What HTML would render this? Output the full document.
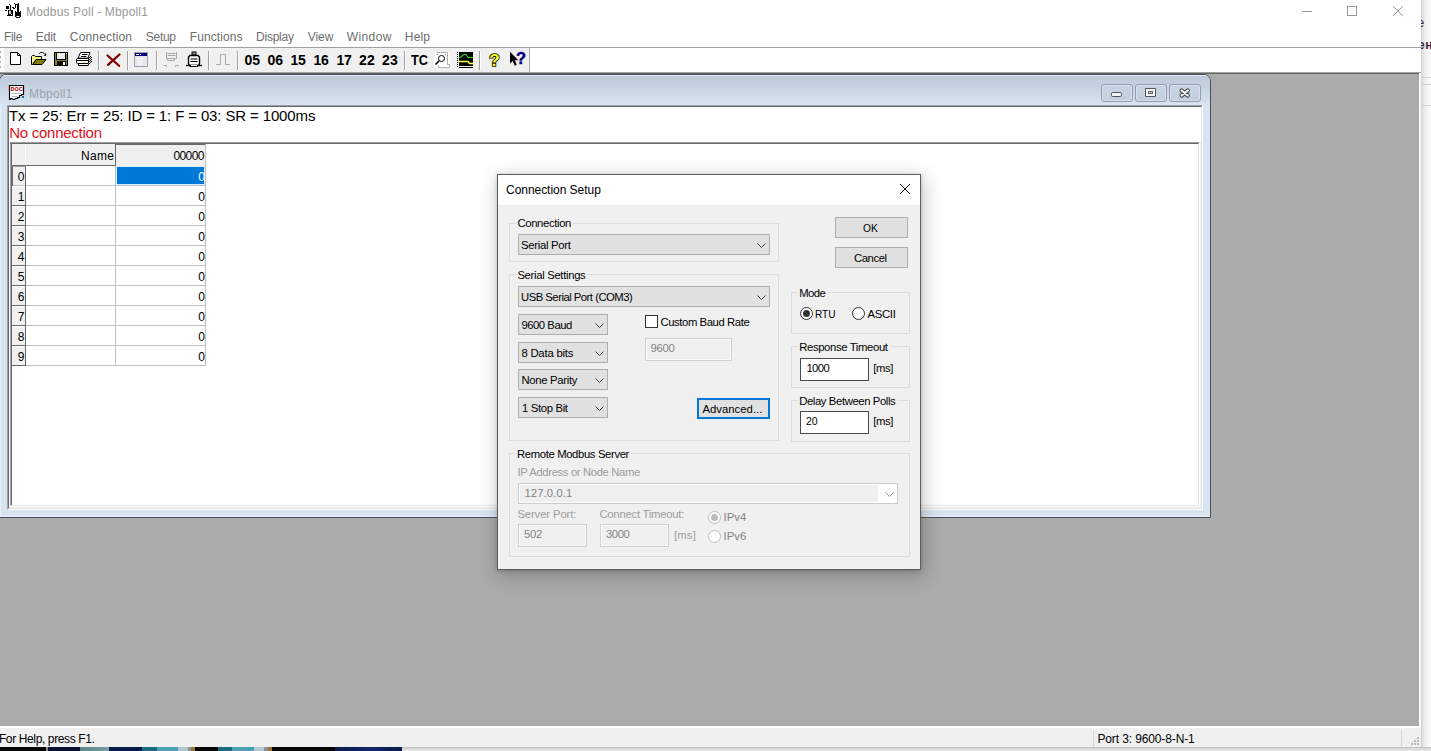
<!DOCTYPE html>
<html><head><meta charset="utf-8"><title>Modbus Poll - Mbpoll1</title>
<style>
html,body{margin:0;padding:0;}
body{width:1431px;height:751px;overflow:hidden;position:relative;background:#fff;font-family:"Liberation Sans",sans-serif;}
div,span.t,svg{position:absolute;box-sizing:border-box;}
span.t{white-space:pre;}
</style></head><body>
<div style="left:1421px;top:0px;width:10px;height:751px;background:linear-gradient(to right,#cdcdcd 0,#dcdcdc 1px,#e9e9e9 3px,#f4f4f4 6px,#fbfbfb 10px);overflow:hidden;"><div style="left:0;top:77px;width:10px;height:1px;background:#d4d4d4"></div><div style="left:0;top:84px;width:10px;height:1px;background:#cfcfcf"></div><div style="left:0;top:105px;width:10px;height:1px;background:#cfcfcf"></div><span class="t" style="left:-3.5px;top:12.5px;font-size:12px;line-height:20px;color:#2a2a34">e</span><span class="t" style="left:-3px;top:35px;font-size:12px;font-weight:bold;line-height:20px;color:#38284a;letter-spacing:0.5px">ен</span></div>
<div style="left:0px;top:747px;width:1431px;height:4px;background:linear-gradient(to bottom,#b9b9b9 0,#cfcfcf 1px,#dcdcdc 2px,#e6e6e6 4px);"></div>
<div style="left:0px;top:747px;width:402px;height:4px;background:linear-gradient(to right,#050505 0,#050505 46px,#8a8a8a 46px,#8a8a8a 48px,#0a1030 48px,#0a1030 80px,#5a8888 80px,#7aa0a0 109px,#0a1a50 109px,#0a1a50 142px,#1a6a80 142px,#1a6a80 157px,#4aa0b4 157px,#4aa0b4 178px,#b0c4cc 178px,#b0c4cc 188px,#8a9098 188px,#8a9098 191px,#9a7430 191px,#9a7430 195px,#050505 195px,#050505 218px,#1a6a80 218px,#1a6a80 232px,#4aa0b4 232px,#4aa0b4 254px,#b8c8d0 254px,#b8c8d0 264px,#8a9098 264px,#8a9098 268px,#9a7430 268px,#9a7430 272px,#050505 272px,#050505 335px,#0a1a4a 335px,#14286a 370px,#0a1a4a 401px);"></div>
<div style="left:0px;top:0px;width:1421px;height:747px;background:#fff;"></div>
<span class="t" style="left:26.00px;top:2.00px;font-size:12px;color:#999999;letter-spacing:0.154px;line-height:20px;">Modbus Poll - Mbpoll1</span>
<span class="t" style="left:4.00px;top:27.00px;font-size:12px;color:#6d6d6d;letter-spacing:-0.312px;line-height:20px;">File</span>
<span class="t" style="left:35.80px;top:27.00px;font-size:12px;color:#6d6d6d;letter-spacing:-0.159px;line-height:20px;">Edit</span>
<span class="t" style="left:69.80px;top:27.00px;font-size:12px;color:#6d6d6d;letter-spacing:0.166px;line-height:20px;">Connection</span>
<span class="t" style="left:145.80px;top:27.00px;font-size:12px;color:#6d6d6d;letter-spacing:-0.290px;line-height:20px;">Setup</span>
<span class="t" style="left:189.80px;top:27.00px;font-size:12px;color:#6d6d6d;letter-spacing:0.072px;line-height:20px;">Functions</span>
<span class="t" style="left:256.00px;top:27.00px;font-size:12px;color:#6d6d6d;letter-spacing:-0.224px;line-height:20px;">Display</span>
<span class="t" style="left:307.80px;top:27.00px;font-size:12px;color:#6d6d6d;letter-spacing:-0.064px;line-height:20px;">View</span>
<span class="t" style="left:346.80px;top:27.00px;font-size:12px;color:#6d6d6d;letter-spacing:0.384px;line-height:20px;">Window</span>
<span class="t" style="left:404.80px;top:27.00px;font-size:12px;color:#6d6d6d;letter-spacing:0.173px;line-height:20px;">Help</span>
<svg style="left:1295px;top:0;width:120px;height:24px" width="120" height="24" viewBox="0 0 120 24" fill="none" stroke="#999" stroke-width="1"><path d="M7 11.5H17"/><rect x="52.5" y="6.5" width="9" height="9"/><path d="M98 6L108 16M108 6L98 16"/></svg>
<div style="left:0px;top:47px;width:1421px;height:1px;background:#a0a0a0;"></div>
<div style="left:0px;top:48px;width:530px;height:24px;background:#f0f0f0;border-right:1px solid #a8a8a8;"></div>
<div style="left:0px;top:72px;width:1421px;height:1px;background:#a0a0a0;"></div>
<div style="left:0px;top:73px;width:1421px;height:1px;background:#646464;"></div>
<div style="left:0px;top:74px;width:1419px;height:652px;background:#ababab;"></div>
<div style="left:1419px;top:73px;width:2px;height:655px;background:#fff;"></div>
<div style="left:0px;top:726px;width:1421px;height:2px;background:#fff;"></div>
<div style="left:0px;top:728px;width:1421px;height:19px;background:#f0f0f0;"></div>
<div style="left:1093px;top:730px;width:1px;height:17px;background:#d7d7d7;"></div>
<div style="left:1401px;top:730px;width:1px;height:17px;background:#d7d7d7;"></div>
<span class="t" style="left:-1.10px;top:728.70px;font-size:12px;color:#000;letter-spacing:-0.372px;line-height:20px;">For Help, press F1.</span>
<span class="t" style="left:1097.40px;top:729.00px;font-size:12px;color:#000;letter-spacing:-0.117px;line-height:20px;">Port 3: 9600-8-N-1</span>
<svg style="left:1409px;top:737px" width="11" height="9"><rect x="8" y="0" width="2" height="2" fill="#b8b8b8"/><rect x="5" y="3" width="2" height="2" fill="#b8b8b8"/><rect x="8" y="3" width="2" height="2" fill="#b8b8b8"/><rect x="2" y="6" width="2" height="2" fill="#b8b8b8"/><rect x="5" y="6" width="2" height="2" fill="#b8b8b8"/><rect x="8" y="6" width="2" height="2" fill="#b8b8b8"/></svg>
<div style="left:98px;top:51px;width:1px;height:19px;background:#a0a0a0;"></div>
<div style="left:99px;top:51px;width:1px;height:19px;background:#fff;"></div>
<div style="left:127px;top:51px;width:1px;height:19px;background:#a0a0a0;"></div>
<div style="left:128px;top:51px;width:1px;height:19px;background:#fff;"></div>
<div style="left:156px;top:51px;width:1px;height:19px;background:#a0a0a0;"></div>
<div style="left:157px;top:51px;width:1px;height:19px;background:#fff;"></div>
<div style="left:208px;top:51px;width:1px;height:19px;background:#a0a0a0;"></div>
<div style="left:209px;top:51px;width:1px;height:19px;background:#fff;"></div>
<div style="left:237px;top:51px;width:1px;height:19px;background:#a0a0a0;"></div>
<div style="left:238px;top:51px;width:1px;height:19px;background:#fff;"></div>
<div style="left:404px;top:51px;width:1px;height:19px;background:#a0a0a0;"></div>
<div style="left:405px;top:51px;width:1px;height:19px;background:#fff;"></div>
<div style="left:479px;top:51px;width:1px;height:19px;background:#a0a0a0;"></div>
<div style="left:480px;top:51px;width:1px;height:19px;background:#fff;"></div>
<div style="left:0px;top:48px;width:4px;height:24px;background:#fdfdfd;"></div>
<div style="left:0px;top:51px;width:1px;height:2px;background:#b0b0b0;"></div>
<div style="left:0px;top:56px;width:1px;height:2px;background:#b0b0b0;"></div>
<div style="left:0px;top:61px;width:1px;height:2px;background:#b0b0b0;"></div>
<div style="left:0px;top:66px;width:1px;height:2px;background:#b0b0b0;"></div>
<span class="t" style="left:244.40px;top:50.00px;font-size:14px;color:#000;letter-spacing:0.028px;line-height:20px;font-weight:bold;">05</span>
<span class="t" style="left:267.40px;top:50.00px;font-size:14px;color:#000;letter-spacing:0.028px;line-height:20px;font-weight:bold;">06</span>
<span class="t" style="left:290.40px;top:50.00px;font-size:14px;color:#000;letter-spacing:-0.172px;line-height:20px;font-weight:bold;">15</span>
<span class="t" style="left:313.40px;top:50.00px;font-size:14px;color:#000;letter-spacing:-0.172px;line-height:20px;font-weight:bold;">16</span>
<span class="t" style="left:336.40px;top:50.00px;font-size:14px;color:#000;letter-spacing:-0.172px;line-height:20px;font-weight:bold;">17</span>
<span class="t" style="left:359.00px;top:50.00px;font-size:14px;color:#000;letter-spacing:0.228px;line-height:20px;font-weight:bold;">22</span>
<span class="t" style="left:382.00px;top:50.00px;font-size:14px;color:#000;letter-spacing:0.228px;line-height:20px;font-weight:bold;">23</span>
<span class="t" style="left:410.60px;top:50.00px;font-size:14px;color:#000;letter-spacing:0.000px;line-height:20px;transform:scaleX(0.9109);transform-origin:0 0;font-weight:bold;">TC</span>
<div style="left:-1px;top:74px;width:1212px;height:444px;background:#d7e4f2;border:1px solid #4a4f56;border-radius:7px 7px 0 0;"></div>
<div style="left:0px;top:106px;width:1px;height:411px;background:#e8eff7;"></div>
<div style="left:0px;top:516px;width:1210px;height:1px;background:#e8eff7;"></div>
<div style="left:0px;top:75px;width:1210px;height:31px;background:linear-gradient(to bottom,#e6edf5 0,#e6edf5 1px,#bccada 1px,#c9d6e4 50%,#d3e0ee 85%,#dce6f1 100%);border-radius:6px 6px 0 0;"></div>
<span class="t" style="left:28.90px;top:83.70px;font-size:12px;color:#9aa0a8;letter-spacing:0.246px;line-height:20px;">Mbpoll1</span>
<div style="left:7px;top:105px;width:1196px;height:405px;background:#fff;border-top:1px solid #a0a0a0;border-left:1px solid #a0a0a0;border-right:1px solid #fff;border-bottom:1px solid #fff;"></div>
<div style="left:8px;top:106px;width:1194px;height:403px;background:#fff;border-top:1px solid #696969;border-left:1px solid #696969;border-right:1px solid #e3e3e3;border-bottom:1px solid #e3e3e3;"></div>
<span class="t" style="left:9.00px;top:105.50px;font-size:15px;color:#000;letter-spacing:-0.130px;line-height:20px;">Tx = 25: Err = 25: ID = 1: F = 03: SR = 1000ms</span>
<span class="t" style="left:9.20px;top:122.50px;font-size:15px;color:#e2101c;letter-spacing:-0.258px;line-height:20px;">No connection</span>
<div style="left:9px;top:142px;width:1192px;height:366px;background:#f0efe9;"></div>
<div style="left:9px;top:142px;width:1191px;height:365px;background:#fff;border-top:1px solid #a0a0a0;border-left:1px solid #fff;border-right:1px solid #fff;border-bottom:1px solid #fff;"></div>
<div style="left:10px;top:143px;width:1189px;height:363px;background:#fff;border-top:1px solid #696969;border-left:1px solid #a0a0a0;border-right:1px solid #e3e3e3;border-bottom:1px solid #e3e3e3;"></div>
<div style="left:11px;top:144px;width:1px;height:361px;background:#696969;"></div>
<div style="left:12px;top:144px;width:194px;height:22px;background:#f0f0f0;"></div>
<div style="left:12px;top:166px;width:14px;height:200px;background:#f0f0f0;"></div>
<div style="left:26px;top:185px;width:180px;height:1px;background:#c0c0c0;"></div>
<div style="left:12px;top:185px;width:14px;height:1px;background:#c0c0c0;"></div>
<div style="left:26px;top:205px;width:180px;height:1px;background:#c0c0c0;"></div>
<div style="left:12px;top:205px;width:14px;height:1px;background:#696969;"></div>
<div style="left:12px;top:186px;width:14px;height:1px;background:#fff;"></div>
<div style="left:26px;top:225px;width:180px;height:1px;background:#c0c0c0;"></div>
<div style="left:12px;top:225px;width:14px;height:1px;background:#696969;"></div>
<div style="left:12px;top:206px;width:14px;height:1px;background:#fff;"></div>
<div style="left:26px;top:245px;width:180px;height:1px;background:#c0c0c0;"></div>
<div style="left:12px;top:245px;width:14px;height:1px;background:#696969;"></div>
<div style="left:12px;top:226px;width:14px;height:1px;background:#fff;"></div>
<div style="left:26px;top:265px;width:180px;height:1px;background:#c0c0c0;"></div>
<div style="left:12px;top:265px;width:14px;height:1px;background:#696969;"></div>
<div style="left:12px;top:246px;width:14px;height:1px;background:#fff;"></div>
<div style="left:26px;top:285px;width:180px;height:1px;background:#c0c0c0;"></div>
<div style="left:12px;top:285px;width:14px;height:1px;background:#696969;"></div>
<div style="left:12px;top:266px;width:14px;height:1px;background:#fff;"></div>
<div style="left:26px;top:305px;width:180px;height:1px;background:#c0c0c0;"></div>
<div style="left:12px;top:305px;width:14px;height:1px;background:#696969;"></div>
<div style="left:12px;top:286px;width:14px;height:1px;background:#fff;"></div>
<div style="left:26px;top:325px;width:180px;height:1px;background:#c0c0c0;"></div>
<div style="left:12px;top:325px;width:14px;height:1px;background:#696969;"></div>
<div style="left:12px;top:306px;width:14px;height:1px;background:#fff;"></div>
<div style="left:26px;top:345px;width:180px;height:1px;background:#c0c0c0;"></div>
<div style="left:12px;top:345px;width:14px;height:1px;background:#696969;"></div>
<div style="left:12px;top:326px;width:14px;height:1px;background:#fff;"></div>
<div style="left:26px;top:365px;width:180px;height:1px;background:#c0c0c0;"></div>
<div style="left:12px;top:365px;width:14px;height:1px;background:#696969;"></div>
<div style="left:12px;top:346px;width:14px;height:1px;background:#fff;"></div>
<div style="left:115px;top:166px;width:1px;height:200px;background:#c0c0c0;"></div>
<div style="left:205px;top:144px;width:1px;height:222px;background:#c0c0c0;"></div>
<div style="left:25px;top:166px;width:1px;height:200px;background:#696969;"></div>
<div style="left:12px;top:165px;width:104px;height:1px;background:#696969;"></div>
<div style="left:25px;top:144px;width:1px;height:21px;background:#fff;"></div>
<div style="left:115px;top:144px;width:1px;height:22px;background:#696969;"></div>
<div style="left:116px;top:144px;width:89px;height:1px;background:#696969;"></div>
<div style="left:11px;top:166px;width:2px;height:20px;background:#696969;"></div>
<div style="left:12px;top:166px;width:14px;height:1px;background:#a0a0a0;"></div>
<div style="left:116px;top:166px;width:89px;height:19px;background:#d4f0ff;"></div>
<div style="left:117px;top:167px;width:87px;height:17px;background:#0078d7;"></div>
<span class="t" style="left:80.90px;top:145.70px;font-size:12px;color:#000;letter-spacing:0.330px;line-height:20px;">Name</span>
<span class="t" style="left:173.40px;top:146.00px;font-size:12px;color:#000;letter-spacing:-0.592px;line-height:20px;">00000</span>
<span class="t" style="left:17.80px;top:167.30px;font-size:12px;color:#000;letter-spacing:0.000px;line-height:20px;">0</span>
<span class="t" style="left:198.20px;top:167.30px;font-size:12px;color:#fff;letter-spacing:0.000px;line-height:20px;">0</span>
<span class="t" style="left:17.80px;top:187.30px;font-size:12px;color:#000;letter-spacing:0.000px;line-height:20px;">1</span>
<span class="t" style="left:198.20px;top:187.30px;font-size:12px;color:#000;letter-spacing:0.000px;line-height:20px;">0</span>
<span class="t" style="left:17.80px;top:207.30px;font-size:12px;color:#000;letter-spacing:0.000px;line-height:20px;">2</span>
<span class="t" style="left:198.20px;top:207.30px;font-size:12px;color:#000;letter-spacing:0.000px;line-height:20px;">0</span>
<span class="t" style="left:17.80px;top:227.30px;font-size:12px;color:#000;letter-spacing:0.000px;line-height:20px;">3</span>
<span class="t" style="left:198.20px;top:227.30px;font-size:12px;color:#000;letter-spacing:0.000px;line-height:20px;">0</span>
<span class="t" style="left:17.80px;top:247.30px;font-size:12px;color:#000;letter-spacing:0.000px;line-height:20px;">4</span>
<span class="t" style="left:198.20px;top:247.30px;font-size:12px;color:#000;letter-spacing:0.000px;line-height:20px;">0</span>
<span class="t" style="left:17.80px;top:267.30px;font-size:12px;color:#000;letter-spacing:0.000px;line-height:20px;">5</span>
<span class="t" style="left:198.20px;top:267.30px;font-size:12px;color:#000;letter-spacing:0.000px;line-height:20px;">0</span>
<span class="t" style="left:17.80px;top:287.30px;font-size:12px;color:#000;letter-spacing:0.000px;line-height:20px;">6</span>
<span class="t" style="left:198.20px;top:287.30px;font-size:12px;color:#000;letter-spacing:0.000px;line-height:20px;">0</span>
<span class="t" style="left:17.80px;top:307.30px;font-size:12px;color:#000;letter-spacing:0.000px;line-height:20px;">7</span>
<span class="t" style="left:198.20px;top:307.30px;font-size:12px;color:#000;letter-spacing:0.000px;line-height:20px;">0</span>
<span class="t" style="left:17.80px;top:327.30px;font-size:12px;color:#000;letter-spacing:0.000px;line-height:20px;">8</span>
<span class="t" style="left:198.20px;top:327.30px;font-size:12px;color:#000;letter-spacing:0.000px;line-height:20px;">0</span>
<span class="t" style="left:17.80px;top:347.30px;font-size:12px;color:#000;letter-spacing:0.000px;line-height:20px;">9</span>
<span class="t" style="left:198.20px;top:347.30px;font-size:12px;color:#000;letter-spacing:0.000px;line-height:20px;">0</span>
<div style="left:1101px;top:84px;width:32px;height:18px;background:linear-gradient(to bottom,#c8d5e4,#c1cfdf);border:1px solid #8e9db3;border-radius:3px;box-shadow:inset 0 0 0 1px rgba(255,255,255,.35);"></div>
<div style="left:1135px;top:84px;width:32px;height:18px;background:linear-gradient(to bottom,#c8d5e4,#c1cfdf);border:1px solid #8e9db3;border-radius:3px;box-shadow:inset 0 0 0 1px rgba(255,255,255,.35);"></div>
<div style="left:1169px;top:84px;width:32px;height:18px;background:linear-gradient(to bottom,#c8d5e4,#c1cfdf);border:1px solid #8e9db3;border-radius:3px;box-shadow:inset 0 0 0 1px rgba(255,255,255,.35);"></div>
<svg style="left:1101px;top:84px" width="100" height="18" viewBox="0 0 100 18" fill="#f4f4f4" stroke="#555" stroke-width="1"><rect x="10.5" y="8.5" width="10" height="4" rx="1.2"/><path d="M44.500 4.500h10v8h-10zM47.500 7.500h4v2h-4z" fill-rule="evenodd"/><path d="M80.600 6.500L86.800 11.500M86.800 6.500L80.600 11.500" stroke="#4c4c4c" stroke-width="4.200" stroke-linecap="round" fill="none"/><path d="M80.600 6.500L86.800 11.500M86.800 6.500L80.600 11.500" stroke="#f6f6f6" stroke-width="2.200" stroke-linecap="round" fill="none"/></svg>
<div style="left:497px;top:174px;width:424px;height:396px;background:#f0f0f0;border:1px solid #5c5c5c;box-shadow:0 1px 4px rgba(0,0,0,.2),2px 5px 18px 2px rgba(0,0,0,.2);"></div>
<div style="left:498px;top:175px;width:422px;height:30px;background:#fff;"></div>
<span class="t" style="left:506.00px;top:180.00px;font-size:12px;color:#000;letter-spacing:-0.040px;line-height:20px;">Connection Setup</span>
<svg style="left:895px;top:179px" width="20" height="20" viewBox="0 0 20 20" fill="none" stroke="#000" stroke-width="1"><path d="M5 5L15 15M15 5L5 15"/></svg>
<div style="left:509px;top:223px;width:270px;height:39px;border:1px solid #dcdcdc;"></div>
<div style="left:516px;top:223px;width:57px;height:1px;background:#f0f0f0;"></div>
<span class="t" style="left:517.40px;top:213.40px;font-size:11.3px;color:#000;letter-spacing:-0.352px;line-height:20px;">Connection</span>
<div style="left:509px;top:274px;width:270px;height:167px;border:1px solid #dcdcdc;"></div>
<div style="left:516px;top:274px;width:71.39999999999998px;height:1px;background:#f0f0f0;"></div>
<span class="t" style="left:517.40px;top:265.00px;font-size:11.3px;color:#000;letter-spacing:-0.319px;line-height:20px;">Serial Settings</span>
<div style="left:791px;top:292px;width:119px;height:42px;border:1px solid #dcdcdc;"></div>
<div style="left:797.8px;top:292px;width:29.600000000000023px;height:1px;background:#f0f0f0;"></div>
<span class="t" style="left:799.20px;top:283.00px;font-size:11.3px;color:#000;letter-spacing:-0.556px;line-height:20px;">Mode</span>
<div style="left:791px;top:346px;width:119px;height:42px;border:1px solid #dcdcdc;"></div>
<div style="left:797.8px;top:346px;width:91.80000000000007px;height:1px;background:#f0f0f0;"></div>
<span class="t" style="left:799.20px;top:337.00px;font-size:11.3px;color:#000;letter-spacing:-0.361px;line-height:20px;">Response Timeout</span>
<div style="left:791px;top:400px;width:119px;height:42px;border:1px solid #dcdcdc;"></div>
<div style="left:797.8px;top:400px;width:99.60000000000002px;height:1px;background:#f0f0f0;"></div>
<span class="t" style="left:799.20px;top:391.00px;font-size:11.3px;color:#000;letter-spacing:-0.391px;line-height:20px;">Delay Between Polls</span>
<div style="left:509px;top:453px;width:401px;height:104px;border:1px solid #dcdcdc;"></div>
<div style="left:515.6px;top:453px;width:115.39999999999998px;height:1px;background:#f0f0f0;"></div>
<span class="t" style="left:517.00px;top:444.00px;font-size:11.3px;color:#000;letter-spacing:-0.365px;line-height:20px;">Remote Modbus Server</span>
<div style="left:518px;top:234px;width:252px;height:21px;background:#e1e1e1;border:1px solid #adadad;"></div>
<span class="t" style="left:521.00px;top:235.00px;font-size:11.3px;color:#000;letter-spacing:-0.295px;line-height:20px;">Serial Port</span>
<svg style="left:756.6px;top:243px" width="10" height="6" viewBox="0 0 10 6" fill="none" stroke="#444" stroke-width="1"><path d="M0.500 0.500L4.500 4.500L8.500 0.500"/></svg>
<div style="left:518px;top:286px;width:252px;height:21px;background:#e1e1e1;border:1px solid #adadad;"></div>
<span class="t" style="left:521.00px;top:287.40px;font-size:11.3px;color:#000;letter-spacing:-0.507px;line-height:20px;">USB Serial Port (COM3)</span>
<svg style="left:756.6px;top:295px" width="10" height="6" viewBox="0 0 10 6" fill="none" stroke="#444" stroke-width="1"><path d="M0.500 0.500L4.500 4.500L8.500 0.500"/></svg>
<div style="left:518px;top:314px;width:90px;height:21px;background:#e1e1e1;border:1px solid #adadad;"></div>
<span class="t" style="left:521.40px;top:314.60px;font-size:11.3px;color:#000;letter-spacing:-0.459px;line-height:20px;">9600 Baud</span>
<svg style="left:594.6px;top:323px" width="10" height="6" viewBox="0 0 10 6" fill="none" stroke="#444" stroke-width="1"><path d="M0.500 0.500L4.500 4.500L8.500 0.500"/></svg>
<div style="left:518px;top:342px;width:90px;height:21px;background:#e1e1e1;border:1px solid #adadad;"></div>
<span class="t" style="left:521.40px;top:342.60px;font-size:11.3px;color:#000;letter-spacing:-0.202px;line-height:20px;">8 Data bits</span>
<svg style="left:594.6px;top:351px" width="10" height="6" viewBox="0 0 10 6" fill="none" stroke="#444" stroke-width="1"><path d="M0.500 0.500L4.500 4.500L8.500 0.500"/></svg>
<div style="left:518px;top:369px;width:90px;height:21px;background:#e1e1e1;border:1px solid #adadad;"></div>
<span class="t" style="left:521.40px;top:370.00px;font-size:11.3px;color:#000;letter-spacing:-0.304px;line-height:20px;">None Parity</span>
<svg style="left:594.6px;top:378px" width="10" height="6" viewBox="0 0 10 6" fill="none" stroke="#444" stroke-width="1"><path d="M0.500 0.500L4.500 4.500L8.500 0.500"/></svg>
<div style="left:518px;top:397px;width:90px;height:21px;background:#e1e1e1;border:1px solid #adadad;"></div>
<span class="t" style="left:522.00px;top:397.60px;font-size:11.3px;color:#000;letter-spacing:-0.333px;line-height:20px;">1 Stop Bit</span>
<svg style="left:594.6px;top:406px" width="10" height="6" viewBox="0 0 10 6" fill="none" stroke="#444" stroke-width="1"><path d="M0.500 0.500L4.500 4.500L8.500 0.500"/></svg>
<div style="left:645px;top:315px;width:13px;height:13px;background:#fff;border:1px solid #333;"></div>
<span class="t" style="left:660.40px;top:312.00px;font-size:11.3px;color:#000;letter-spacing:-0.405px;line-height:20px;">Custom Baud Rate</span>
<div style="left:645px;top:338px;width:87px;height:23px;background:#f0f0f0;border:1px solid #d0d0d0;box-shadow:inset 0 0 0 1px #fbfbfb;"></div>
<span class="t" style="left:650.40px;top:338.00px;font-size:11.3px;color:#838383;letter-spacing:-0.246px;line-height:20px;">9600</span>
<div style="left:835px;top:217px;width:73px;height:21px;background:#e1e1e1;border:1px solid #adadad;"></div>
<span class="t" style="left:863.00px;top:217.60px;font-size:11.3px;color:#000;letter-spacing:0.000px;line-height:20px;transform:scaleX(0.9065);transform-origin:0 0;">OK</span>
<div style="left:835px;top:247px;width:73px;height:21px;background:#e1e1e1;border:1px solid #adadad;"></div>
<span class="t" style="left:854.00px;top:247.80px;font-size:11.3px;color:#000;letter-spacing:-0.435px;line-height:20px;">Cancel</span>
<div style="left:697px;top:398px;width:73px;height:21px;background:#e1e1e1;border:2px solid #0078d7;"></div>
<span class="t" style="left:702.40px;top:398.60px;font-size:11.3px;color:#000;letter-spacing:0.032px;line-height:20px;">Advanced...</span>
<div style="left:800px;top:307px;width:13px;height:13px;border:1px solid #333;border-radius:50%;background:#fff;"><div style="left:2px;top:2px;width:7px;height:7px;border-radius:50%;background:#333;"></div></div>
<span class="t" style="left:815.20px;top:304.00px;font-size:11.3px;color:#000;letter-spacing:0.000px;line-height:20px;transform:scaleX(0.8949);transform-origin:0 0;">RTU</span>
<div style="left:852px;top:307px;width:13px;height:13px;border:1px solid #333;border-radius:50%;background:#fff;"></div>
<span class="t" style="left:867.40px;top:304.00px;font-size:11.3px;color:#000;letter-spacing:-0.278px;line-height:20px;">ASCII</span>
<div style="left:800px;top:358px;width:69px;height:23px;background:#fff;border:1px solid #4a4a4a;"></div>
<span class="t" style="left:806.40px;top:358.00px;font-size:11.3px;color:#000;letter-spacing:-0.579px;line-height:20px;">1000</span>
<span class="t" style="left:873.20px;top:358.00px;font-size:11.3px;color:#000;letter-spacing:-0.381px;line-height:20px;">[ms]</span>
<div style="left:800px;top:411px;width:69px;height:23px;background:#fff;border:1px solid #4a4a4a;"></div>
<span class="t" style="left:806.40px;top:411.00px;font-size:11.3px;color:#000;letter-spacing:0.000px;line-height:20px;transform:scaleX(0.9229);transform-origin:0 0;">20</span>
<span class="t" style="left:873.20px;top:411.00px;font-size:11.3px;color:#000;letter-spacing:-0.381px;line-height:20px;">[ms]</span>
<span class="t" style="left:517.40px;top:462.00px;font-size:11.3px;color:#9d9d9d;letter-spacing:-0.367px;line-height:20px;">IP Address or Node Name</span>
<div style="left:518px;top:483px;width:380px;height:21px;background:#fff;border:1px solid #cccccc;"></div>
<div style="left:520px;top:485px;width:358px;height:17px;background:#efefef;"></div>
<span class="t" style="left:524.40px;top:483.00px;font-size:11.3px;color:#838383;letter-spacing:0.109px;line-height:20px;">127.0.0.1</span>
<svg style="left:884.5px;top:491.5px" width="10" height="6" viewBox="0 0 10 6" fill="none" stroke="#9a9a9a" stroke-width="1"><path d="M0.500 0.500L4.500 4.500L8.500 0.500"/></svg>
<span class="t" style="left:517.40px;top:504.00px;font-size:11.3px;color:#9d9d9d;letter-spacing:-0.117px;line-height:20px;">Server Port:</span>
<span class="t" style="left:599.40px;top:504.00px;font-size:11.3px;color:#9d9d9d;letter-spacing:-0.238px;line-height:20px;">Connect Timeout:</span>
<div style="left:518px;top:524px;width:69px;height:23px;background:#f0f0f0;border:1px solid #d0d0d0;box-shadow:inset 0 0 0 1px #fbfbfb;"></div>
<span class="t" style="left:524.00px;top:524.00px;font-size:11.3px;color:#838383;letter-spacing:-0.227px;line-height:20px;">502</span>
<div style="left:600px;top:524px;width:69px;height:23px;background:#f0f0f0;border:1px solid #d0d0d0;box-shadow:inset 0 0 0 1px #fbfbfb;"></div>
<span class="t" style="left:606.00px;top:524.00px;font-size:11.3px;color:#838383;letter-spacing:-0.446px;line-height:20px;">3000</span>
<span class="t" style="left:674.00px;top:525.00px;font-size:11.3px;color:#9d9d9d;letter-spacing:0.153px;line-height:20px;">[ms]</span>
<div style="left:708px;top:510.5px;width:13px;height:13px;border:1px solid #bcbcbc;border-radius:50%;background:#fff;"><div style="left:2px;top:2px;width:7px;height:7px;border-radius:50%;background:#bcbcbc;"></div></div>
<span class="t" style="left:723.40px;top:507.00px;font-size:11.3px;color:#838383;letter-spacing:0.130px;line-height:20px;">IPv4</span>
<div style="left:708px;top:529.5px;width:13px;height:13px;border:1px solid #bcbcbc;border-radius:50%;background:#fff;"></div>
<span class="t" style="left:723.40px;top:526.00px;font-size:11.3px;color:#838383;letter-spacing:0.130px;line-height:20px;">IPv6</span>
<svg style="left:5px;top:3px" width="16" height="16" viewBox="0 0 16 16" fill="#000"><rect x="9" y="0" width="1" height="1"/><rect x="4" y="1" width="1" height="1"/><rect x="10" y="1" width="4" height="1"/><rect x="13" y="0" width="1" height="1"/><rect x="12" y="2" width="2" height="7"/><rect x="10" y="2" width="1" height="3"/><rect x="1" y="3" width="3" height="3"/><rect x="5" y="2" width="1" height="5"/><rect x="7" y="4" width="2" height="1"/><rect x="8" y="5" width="2" height="1"/><rect x="0" y="7" width="2" height="1"/><rect x="3" y="7" width="5" height="6"/><rect x="2" y="12" width="6" height="1"/><rect x="10" y="8" width="1" height="1"/><rect x="15" y="8" width="1" height="1"/><rect x="10" y="9" width="6" height="4"/><rect x="10" y="13" width="1.4" height="1"/><rect x="14.4" y="13" width="1.6" height="1"/><rect x="11" y="14" width="4" height="1"/><rect x="4.200" y="7.700" width="1.600" height="3.200" fill="#fff"/><rect x="6" y="11" width="1" height="1" fill="#fff"/></svg>
<svg style="left:9px;top:51px" width="14" height="16" viewBox="0 0 14 16" ><path d="M1.500 1.500H8.500L11.500 4.500V13.500H1.500Z" fill="#fff" stroke="#000"/><path d="M8.500 1.500V4.500H11.500" fill="none" stroke="#000"/></svg>
<svg style="left:30px;top:50px" width="18" height="17" viewBox="0 0 18 17" ><path d="M1.500 14.500V6.500L2.500 5.500H4.500L5.500 6.500H11.500V9.500H6L2.500 14.500Z" fill="#f4f48a" stroke="#000"/><path d="M2.800 14.500L6.300 9.500H16L12 14.500Z" fill="#808000" stroke="#000"/><path d="M9 3.800C10.500 1.800 13 1.800 15 4.400" fill="none" stroke="#000"/><path d="M16.200 2.800V5.700H13.600Z" fill="#000"/></svg>
<svg style="left:53px;top:51px" width="16" height="16" viewBox="0 0 16 16" ><rect x="1.500" y="1.500" width="13" height="13" fill="#7f8030" stroke="#000"/><rect x="3.500" y="1.500" width="9" height="7" fill="#ececec" stroke="#000"/><rect x="13" y="2" width="1" height="1" fill="#fff"/><rect x="4" y="10" width="9" height="5" fill="#140c04"/><rect x="10" y="11" width="2" height="3" fill="#fff"/></svg>
<svg style="left:75px;top:51px" width="18" height="17" viewBox="0 0 18 17" ><defs><pattern id="dz" width="2" height="2" patternUnits="userSpaceOnUse"><rect x="0" y="0" width="1" height="1" fill="#000"/><rect x="1" y="1" width="1" height="1" fill="#000"/></pattern></defs><path d="M13 7L15.500 4L17 5.500V10.500L13 14.500Z" fill="#fff"/><path d="M13 7L15.500 4L17 5.500V10.500L13 14.500Z" fill="url(#dz)"/><path d="M5.500 1.500H15L13 7.200H3Z" fill="#fff" stroke="#000"/><path d="M7 3.500H12.500M6 5.500H11.500" stroke="#000" fill="none"/><rect x="1.500" y="7.500" width="12" height="5" rx="1" fill="#fff" stroke="#000"/><path d="M2 9.500H13" stroke="#000"/><path d="M8.500 11H10.500" stroke="#d0d838"/><rect x="3.500" y="12.500" width="9.500" height="2" fill="#fff" stroke="#000"/></svg>
<svg style="left:105px;top:52px" width="17" height="16" viewBox="0 0 17 16" ><path d="M2.500 3.500L13.800 13.500M14.500 2.500L3 12.800" stroke="#800000" stroke-width="2.300" stroke-linecap="round" fill="none"/><rect x="14" y="14" width="1" height="1" fill="#800000"/></svg>
<svg style="left:133px;top:51px" width="16" height="17" viewBox="0 0 16 17" ><rect x="1.500" y="1.500" width="13" height="14" fill="#e6e6ee" stroke="#a0a0a8"/><rect x="2" y="2" width="12" height="3" fill="#000080"/><rect x="3" y="3" width="3" height="1" fill="#fff"/><rect x="7" y="3" width="1" height="1" fill="#fff"/><path d="M4 7.500H10M4 10.500H10M4 13H10" stroke="#fff"/></svg>
<svg style="left:162px;top:51px" width="18" height="17" viewBox="0 0 18 17" ><path d="M4.500 1V7.500H14.500V1" fill="none" stroke="#a8a8a8"/><path d="M5.500 2.500H13.500M5.500 4.500H13.500" stroke="#a8a8a8"/><path d="M5.500 7.500V9.500H12.500V7.500" fill="none" stroke="#a8a8a8"/><path d="M1.500 14.500H4.500V16M13.500 16V14.500H17" fill="none" stroke="#a8a8a8"/></svg>
<svg style="left:185px;top:51px" width="18" height="17" viewBox="0 0 18 17" ><rect x="7" y="1" width="4" height="3" fill="#909090" stroke="#000" stroke-width="1"/><path d="M5 4.500H13L14.500 6V12.500L13.500 14.500H4.500L3.500 12.500V6Z" fill="#fff" stroke="#000" stroke-width="1.400"/><path d="M5.500 8H12.500M5.500 10.500H12.500" stroke="#000" stroke-width="1.200"/><path d="M1 14.500H17" stroke="#000" stroke-width="1.400"/><rect x="6" y="14" width="6" height="1" fill="#fff"/><path d="M5 15.500H13" stroke="#000"/></svg>
<svg style="left:215px;top:53px" width="17" height="13" viewBox="0 0 17 13" ><path d="M1 11.500H5.500V1.500H10.500V11.500H15" fill="none" stroke="#a8a8a8"/></svg>
<svg style="left:433px;top:51px" width="18" height="18" viewBox="0 0 18 18" ><rect x="1" y="1" width="16" height="16" fill="#fff"/><path d="M3.500 1.500H14.500V13.500H16.500V16.500H5.500V14" fill="none" stroke="#b0b0b0"/><circle cx="8.500" cy="7.500" r="3" fill="#fff" stroke="#000"/><path d="M6 10L2.500 13.500" stroke="#000" stroke-width="1.600"/><rect x="4" y="3" width="1" height="1" fill="#888"/><rect x="12" y="3" width="1" height="1" fill="#888"/></svg>
<svg style="left:456px;top:51px" width="18" height="18" viewBox="0 0 18 18" ><rect x="3" y="1" width="14" height="14" fill="#000"/><path d="M1.500 1V16" stroke="#000" stroke-dasharray="1 1"/><path d="M3 16.500H17" stroke="#000"/><path d="M3 7L6 5L8 3.500H10L12 6.500H17" fill="none" stroke="#20e020" stroke-width="1.200"/><path d="M3 10.500H12L13.500 12.500H17" fill="none" stroke="#ffff40" stroke-width="1.400"/></svg>
<svg style="left:486px;top:49px" width="18" height="20" viewBox="0 0 18 20"><text x="8.500" y="16.800" text-anchor="middle" font-family="Liberation Sans, sans-serif" font-weight="bold" font-size="17" fill="#ffff20" stroke="#000" stroke-width="1.700" paint-order="stroke">?</text></svg>
<svg style="left:508px;top:49px" width="20" height="20" viewBox="0 0 20 20"><path d="M2 2.800V14.500L4.700 12L6.800 16.700L8.800 15.700L6.800 11.200H10.300Z" fill="#000"/><text x="13" y="15" text-anchor="middle" font-family="Liberation Sans, sans-serif" font-weight="bold" font-size="16.500" fill="#000080" stroke="#000080" stroke-width="0.400">?</text></svg>
<svg style="left:8px;top:84px" width="18" height="18" viewBox="0 0 18 18"><path d="M1.500 1.500H15.500V10.500H13.500V11.500H11.500V13.500H9.500V14.500H7.500L6.500 15.500H5L4 14.500H3L2 15.500H1.500Z" fill="#fff" stroke="#000" stroke-width="1.200"/><text x="8.900" y="6.900" text-anchor="middle" font-family="Liberation Sans, sans-serif" font-weight="bold" font-size="5" fill="#b00000" stroke="#b00000" stroke-width="0.150" letter-spacing="0.450">DOC</text><path d="M4 9.500H13M4 12.500H9.500" stroke="#b4b4b4"/><rect x="14" y="12" width="2" height="2" fill="#108080"/></svg>
</body></html>
